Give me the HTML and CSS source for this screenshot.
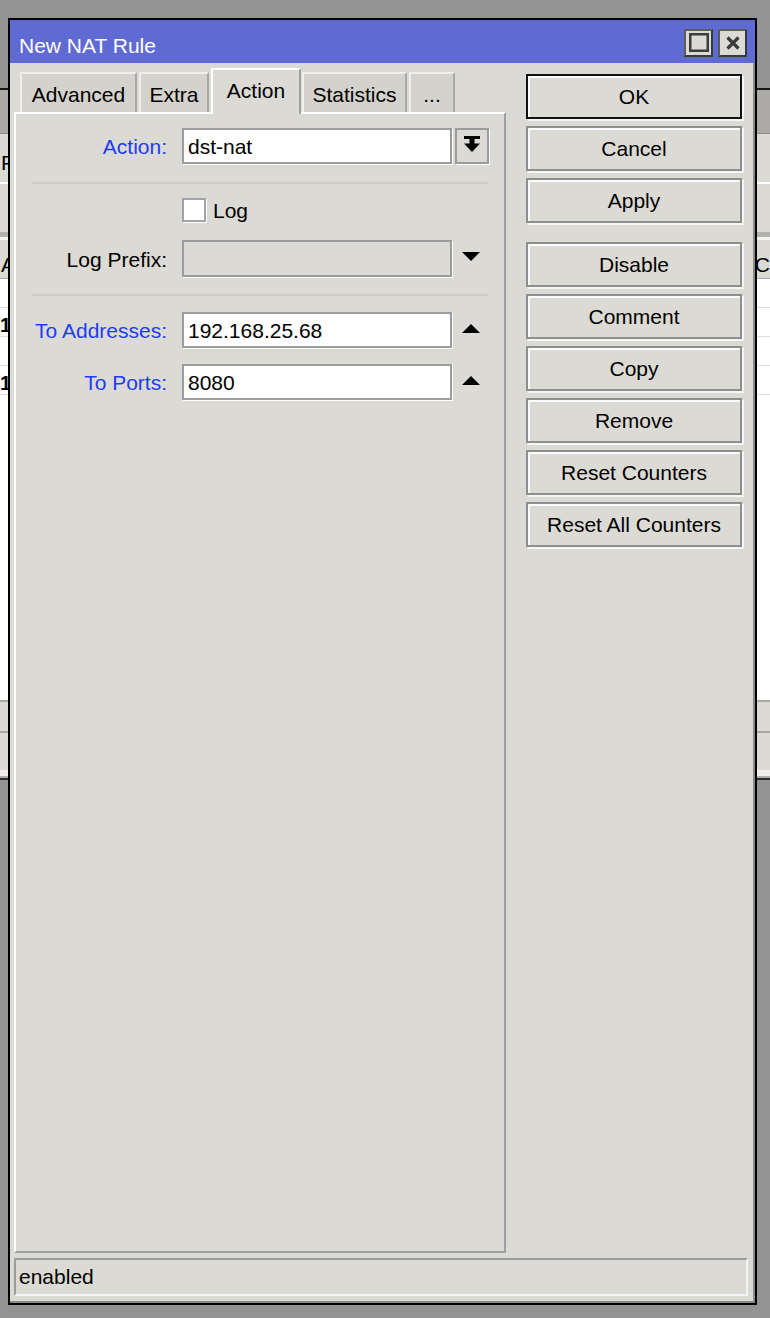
FILE: index.html
```html
<!DOCTYPE html>
<html>
<head>
<meta charset="utf-8">
<title>New NAT Rule</title>
<link rel="stylesheet" href="styles.css">
</head>
<body>
<div class="bgapp">
  <div class="bg-toolbar"></div>
  <div class="bg-tabs"><span class="bg-tab-label">F</span></div>
  <div class="bg-filter"></div>
  <div class="bg-header"><span class="bg-h-left">A</span><span class="bg-h-right">C</span></div>
  <div class="bg-body">
    <div class="bg-row"></div>
    <div class="bg-row"><span class="bg-num">1</span></div>
    <div class="bg-row"></div>
    <div class="bg-row"><span class="bg-num">1</span></div>
  </div>
  <div class="bg-footer">
    <div class="bg-foot1"></div>
    <div class="bg-foot2"></div>
  </div>
</div>

<div class="dialog">
  <div class="titlebar">
    <span class="title">New NAT Rule</span>
    <div class="title-buttons">
      <div class="tbtn">
        <svg width="25" height="24" viewBox="0 0 25 24"><rect x="4.25" y="3.25" width="17.5" height="16.5" fill="none" stroke="#3c3c3c" stroke-width="2.5"/></svg>
      </div>
      <div class="tbtn">
        <svg width="25" height="24" viewBox="0 0 25 24"><path d="M7.5 6.5 L18.5 17.5 M18.5 6.5 L7.5 17.5" stroke="#3c3c3c" stroke-width="3.2" fill="none"/></svg>
      </div>
    </div>
  </div>
  <div class="body">
    <div class="main">
      <div class="leftcol">
        <div class="tabs">
          <div class="tab t-adv">Advanced</div>
          <div class="tab t-extra">Extra</div>
          <div class="tab tab-active t-action">Action</div>
          <div class="tab t-stats">Statistics</div>
          <div class="tab t-more">...</div>
        </div>
        <div class="panel">
          <div class="row row-action">
            <div class="label blue">Action:</div>
            <div class="field">dst-nat</div>
            <div class="dropbtn">
              <svg width="30" height="32" viewBox="0 0 30 32"><rect x="7" y="6" width="16" height="3" fill="#000"/><rect x="12.5" y="9" width="5" height="5" fill="#000"/><polygon points="7,13.5 23,13.5 15,22" fill="#000"/></svg>
            </div>
          </div>
          <div class="sep sep1"></div>
          <div class="row row-log">
            <div class="label"></div>
            <div class="checkbox"></div>
            <span class="check-label">Log</span>
          </div>
          <div class="row row-prefix">
            <div class="label">Log Prefix:</div>
            <div class="field field-disabled"></div>
            <div class="arrow">
              <svg width="18" height="10" viewBox="0 0 18 10"><polygon points="0,0 18,0 9,9" fill="#000"/></svg>
            </div>
          </div>
          <div class="sep sep2"></div>
          <div class="row row-addr">
            <div class="label blue">To Addresses:</div>
            <div class="field">192.168.25.68</div>
            <div class="arrow">
              <svg width="18" height="10" viewBox="0 0 18 10"><polygon points="0,9 18,9 9,0" fill="#000"/></svg>
            </div>
          </div>
          <div class="row row-ports">
            <div class="label blue">To Ports:</div>
            <div class="field">8080</div>
            <div class="arrow">
              <svg width="18" height="10" viewBox="0 0 18 10"><polygon points="0,9 18,9 9,0" fill="#000"/></svg>
            </div>
          </div>
        </div>
      </div>
      <div class="rightcol">
        <div class="btn btn-default">OK</div>
        <div class="btn">Cancel</div>
        <div class="btn">Apply</div>
        <div class="btn btn-gap">Disable</div>
        <div class="btn">Comment</div>
        <div class="btn">Copy</div>
        <div class="btn">Remove</div>
        <div class="btn">Reset Counters</div>
        <div class="btn">Reset All Counters</div>
      </div>
    </div>
    <div class="statusbar">enabled</div>
  </div>
</div>
</body>
</html>
```

FILE: styles.css
```css
* { box-sizing: border-box; }
html, body { margin: 0; padding: 0; }
body {
  width: 770px;
  height: 1318px;
  background: #939393;
  font-family: "Liberation Sans", Arial, sans-serif;
  font-size: 21px;
  color: #000;
  position: relative;
  overflow: hidden;
}

/* background application window */
.bgapp {
  margin-top: 88px;
  height: 692px;
  display: flex;
  flex-direction: column;
  background: #dcdad5;
  border-top: 2px solid #151515;
  border-bottom: 2px solid #2a2a2a;
}
.bg-toolbar { height: 44px; background: #abaaa7; border-bottom: 1px solid #8f8f8f; }
.bg-tabs { height: 50px; border-bottom: 2px solid #fff; display: flex; align-items: center; padding-left: 1px; padding-top: 10px; }
.bg-tab-label { font-size: 21px; }
.bg-filter { height: 56px; border-bottom: 3px solid #f4f4f2; box-shadow: inset 0 -5px 0 #b5b3ae; }
.bg-header { height: 39px; display: flex; justify-content: space-between; align-items: center; border-bottom: 1px solid #a5a5a5; padding: 12px 0 0 1px; }
.bg-h-right { margin-right: 0; }
.bg-body { flex: 1; background: #fff; }
.bg-row { height: 29px; border-bottom: 1px solid #dedede; display: flex; align-items: center; padding-top: 6px; }
.bg-num { font-weight: bold; font-size: 20px; }
.bg-footer { height: 78px; border-top: 2px solid #aaa9a6; display: flex; flex-direction: column; }
.bg-foot1 { height: 31px; border-bottom: 2px solid #a9a8a5; }
.bg-foot2 { flex: 1; border-bottom: 2px solid #b0afac; box-shadow: inset 0 -6px 0 #efeeec; }

/* dialog window */
.dialog {
  position: absolute;
  left: 8px;
  top: 18px;
  width: 749px;
  height: 1287px;
  border: 2px solid #000;
  background: #dcdad5;
  display: flex;
  flex-direction: column;
  box-shadow: inset -2px -2px 0 #8a8a8a;
}
.titlebar {
  height: 43px;
  flex: none;
  background: #5f6bd3;
  color: #fff;
  display: flex;
  align-items: center;
  padding-left: 9px;
  padding-right: 8px;
}
.title { margin-top: 8px; }
.title-buttons { margin-left: auto; display: flex; gap: 5px; margin-top: 3px; }
.tbtn {
  width: 29px;
  height: 28px;
  background: #dcdad5;
  border: 2px solid #5c5c5c;
  border-right-color: #3a3a3a;
  border-bottom-color: #3a3a3a;
  display: flex;
}
.tbtn svg { display: block; }

.body {
  flex: 1;
  display: flex;
  flex-direction: column;
  padding: 5px 9px 7px 4px;
}
.main { flex: 1; display: flex; }
.leftcol { width: 492px; display: flex; flex-direction: column; }

.tabs { height: 44px; display: flex; align-items: flex-end; padding-left: 6px; flex: none; }
.tab {
  height: 40px;
  background: #d4d2cd;
  border-left: 2px solid #efeeea;
  border-top: 2px solid #efeeea;
  border-right: 2px solid #a8a8a8;
  display: flex;
  align-items: center;
  justify-content: center;
  padding-top: 3px;
  margin-right: 2px;
  white-space: nowrap;
}
.t-adv { width: 117px; }
.t-extra { width: 70px; }
.t-action { width: 90px; margin-right: 1px; }
.t-stats { width: 105px; }
.t-more { width: 46px; }
.tab-active {
  height: 46px;
  margin-bottom: -2px;
  background: #dcdad5;
  border-left-color: #fff;
  border-top-color: #fff;
  border-right-color: #a0a0a0;
  position: relative;
  z-index: 1;
  padding-top: 0;
  padding-bottom: 2px;
}

.panel {
  flex: 1;
  border: 2px solid #a0a0a0;
  border-top-color: #fff;
  border-left-color: #fff;
  padding-top: 14px;
}
.row { display: flex; align-items: center; height: 36px; }
.label { width: 151px; text-align: right; margin-right: 15px; flex: none; white-space: nowrap; padding-top: 2px; }
.blue { color: #1c3cfa; }
.field {
  width: 270px;
  height: 36px;
  background: #fff;
  border: 2px solid #9c9c9c;
  box-shadow: 1px 1px 0 #fff;
  padding-left: 4px;
  padding-top: 1px;
  display: flex;
  align-items: center;
  flex: none;
}
.field-disabled { background: #dcdad5; height: 37px; }
.dropbtn {
  width: 34px;
  height: 36px;
  margin-left: 3px;
  border: 2px solid #9c9c9c;
  box-shadow: 1px 1px 0 #fff;
  display: flex;
}
.dropbtn svg { display: block; }
.arrow { width: 34px; margin-left: 2px; display: flex; justify-content: center; align-items: center; }
.arrow svg { display: block; }
.row-addr .arrow, .row-ports .arrow { margin-top: -3px; }
.row-prefix .arrow { margin-top: -3px; }

.sep { height: 2px; background: #cdcac5; margin-left: 16px; width: 456px; }
.sep1 { margin-top: 18px; }
.row-log { margin-top: 14px; height: 24px; }
.checkbox {
  width: 24px;
  height: 24px;
  background: #fff;
  border: 2px solid #a3a3a3;
  box-shadow: 1px 1px 0 #fff;
  flex: none;
}
.check-label { margin-left: 7px; padding-top: 2px; }
.row-prefix { margin-top: 18px; height: 37px; }
.sep2 { margin-top: 17px; }
.row-addr { margin-top: 16px; }
.row-ports { margin-top: 16px; }

.rightcol {
  width: 216px;
  margin-left: 20px;
  padding-top: 6px;
  display: flex;
  flex-direction: column;
  gap: 7px;
}
.btn {
  height: 45px;
  background: #dcdad5;
  border: 2px solid #8e8e8e;
  box-shadow: inset 2px 2px 0 #fbfbfb, 2px 2px 0 #f6f6f6;
  display: flex;
  align-items: center;
  justify-content: center;
  padding-top: 1px;
  white-space: nowrap;
}
.btn-default { border-color: #111; }
.btn-gap { margin-top: 12px; }

.statusbar {
  height: 38px;
  flex: none;
  margin-top: 5px;
  margin-right: -2px;
  border: 2px solid #f4f4f4;
  border-top-color: #9c9c9c;
  border-left-color: #9c9c9c;
  padding-left: 3px;
  display: flex;
  align-items: center;
}
```
